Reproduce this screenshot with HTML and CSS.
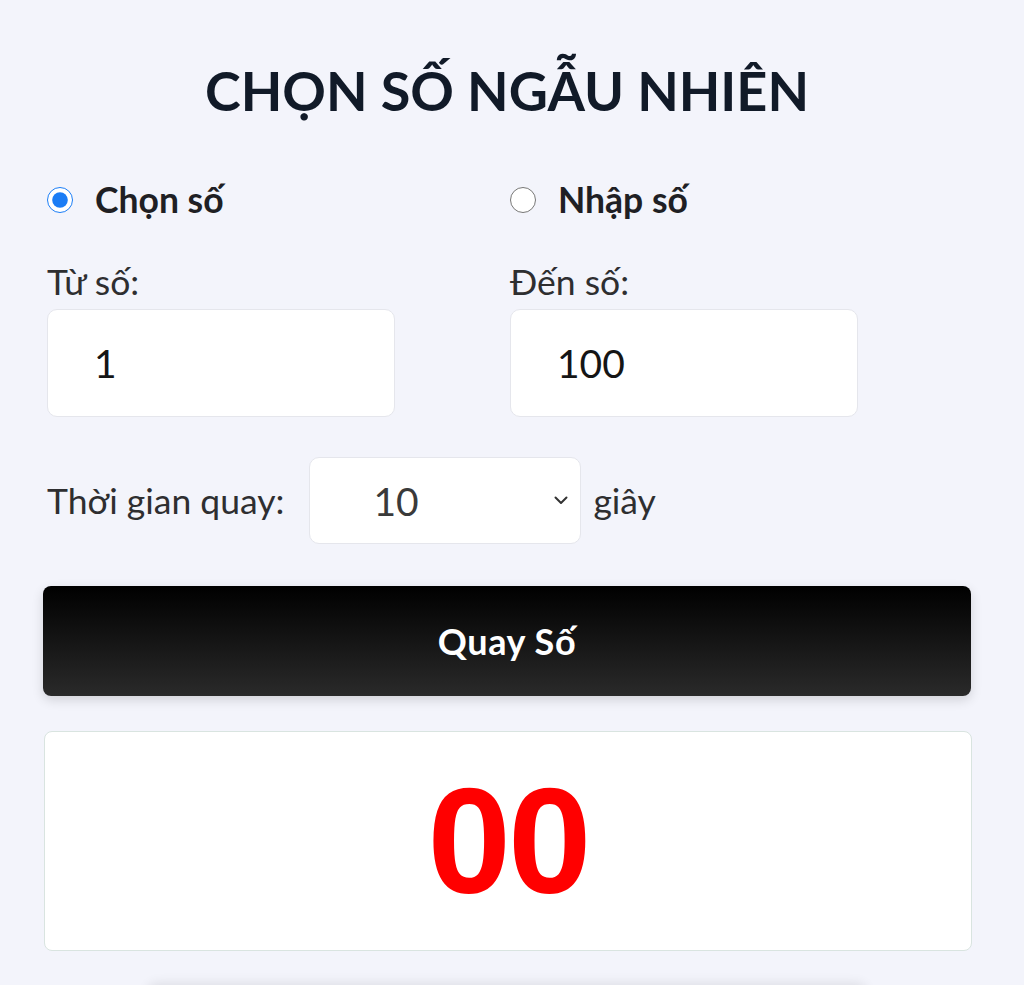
FILE: index.html
```html
<!DOCTYPE html>
<html lang="vi">
<head>
<meta charset="utf-8">
<title>Chọn số ngẫu nhiên</title>
<link rel="stylesheet" href="styles.css">
</head>
<body>
<div class="app">
  <h1 class="title">CHỌN SỐ NGẪU NHIÊN</h1>

  <div class="grid">
    <label class="mode"><input type="radio" name="mode" checked><span>Chọn số</span></label>
    <label class="mode"><input type="radio" name="mode"><span>Nhập số</span></label>

    <div class="field">
      <div class="label">Từ số:</div>
      <input class="num" type="text" value="1">
    </div>
    <div class="field">
      <div class="label">Đến số:</div>
      <input class="num" type="text" value="100">
    </div>
  </div>

  <div class="time-row">
    <span class="label">Thời gian quay:</span>
    <select class="time">
      <option>10</option>
    </select>
    <span class="label">giây</span>
  </div>

  <button class="spin">Quay Số</button>

  <div class="result">00</div>

  <div class="next"></div>
</div>
</body>
</html>
```

FILE: styles.css
```css
html, body {
  margin: 0;
  padding: 0;
  background: #f3f4fb;
}

body {
  font-family: Lato, "Noto Sans", sans-serif;
  color: #2b2b2b;
}

.app {
  padding: 0 53px 0 43px;
  overflow: hidden;
  height: 985px;
  box-sizing: border-box;
}

.title {
  margin: 59px 0 0;
  font-size: 54px;
  line-height: 64px;
  font-weight: 700;
  text-align: center;
  color: #111a28;
}

.grid {
  margin: 55px 0 0 4px;
  display: grid;
  grid-template-columns: 463px 1fr;
  row-gap: 40px;
}

.mode {
  display: flex;
  align-items: center;
  gap: 22px;
  font-size: 35.5px;
  line-height: 44px;
  font-weight: 700;
  color: #1f1f24;
}

.mode input {
  width: 26px;
  height: 26px;
  margin: 0;
  accent-color: #1a7cf5;
}

.label {
  font-size: 35.5px;
  line-height: 40px;
  color: #2e2e30;
}

.field .label {
  margin-bottom: 7px;
}

.num {
  display: block;
  box-sizing: border-box;
  width: 348px;
  height: 108px;
  padding: 0 46px;
  border: 1px solid #e5e6ec;
  border-radius: 10px;
  background: #fff;
  font-family: Lato, "Noto Sans", sans-serif;
  font-size: 39px;
  color: #151515;
  outline: none;
}

.time-row {
  margin: 40px 0 0 4px;
  display: flex;
  align-items: center;
}

.time {
  appearance: none;
  -webkit-appearance: none;
  box-sizing: border-box;
  width: 272px;
  height: 87px;
  margin: 0 12px 0 25px;
  padding: 0 0 0 63px;
  border: 1px solid #e5e6ec;
  border-radius: 10px;
  background-color: #fff;
  background-image: url("data:image/svg+xml,%3Csvg xmlns='http://www.w3.org/2000/svg' width='14' height='9' viewBox='0 0 14 9'%3E%3Cpath d='M1.5 1.5 L7 7 L12.5 1.5' fill='none' stroke='%23333' stroke-width='2' stroke-linecap='round' stroke-linejoin='round'/%3E%3C/svg%3E");
  background-repeat: no-repeat;
  background-position: right 12px center;
  font-family: Lato, "Noto Sans", sans-serif;
  font-size: 39px;
  color: #3a3a3a;
  outline: none;
}

.spin {
  display: block;
  width: 928px;
  height: 110px;
  margin: 42px 0 0;
  border: none;
  border-radius: 8px;
  background: linear-gradient(to bottom, #000000, #2a2a2a);
  box-shadow: 0 4px 12px rgba(0, 0, 0, 0.14);
  font-family: Lato, "Noto Sans", sans-serif;
  font-size: 36px;
  font-weight: 700;
  letter-spacing: 0.6px;
  color: #fff;
}

.result {
  box-sizing: border-box;
  width: 928px;
  height: 220px;
  margin: 35px 0 0 1px;
  border: 1px solid #d9e4e0;
  border-radius: 8px;
  background: #fff;
  display: flex;
  align-items: center;
  justify-content: center;
  font-family: "Liberation Sans", Arial, sans-serif;
  font-size: 150px;
  font-weight: 700;
  color: #ff0000;
  letter-spacing: -3px;
}

.next {
  width: 720px;
  height: 80px;
  margin: 36px auto 0;
  background: #f3f4fb;
  border-radius: 10px;
  box-shadow: 0 -4px 12px rgba(0, 0, 0, 0.09);
}
```
